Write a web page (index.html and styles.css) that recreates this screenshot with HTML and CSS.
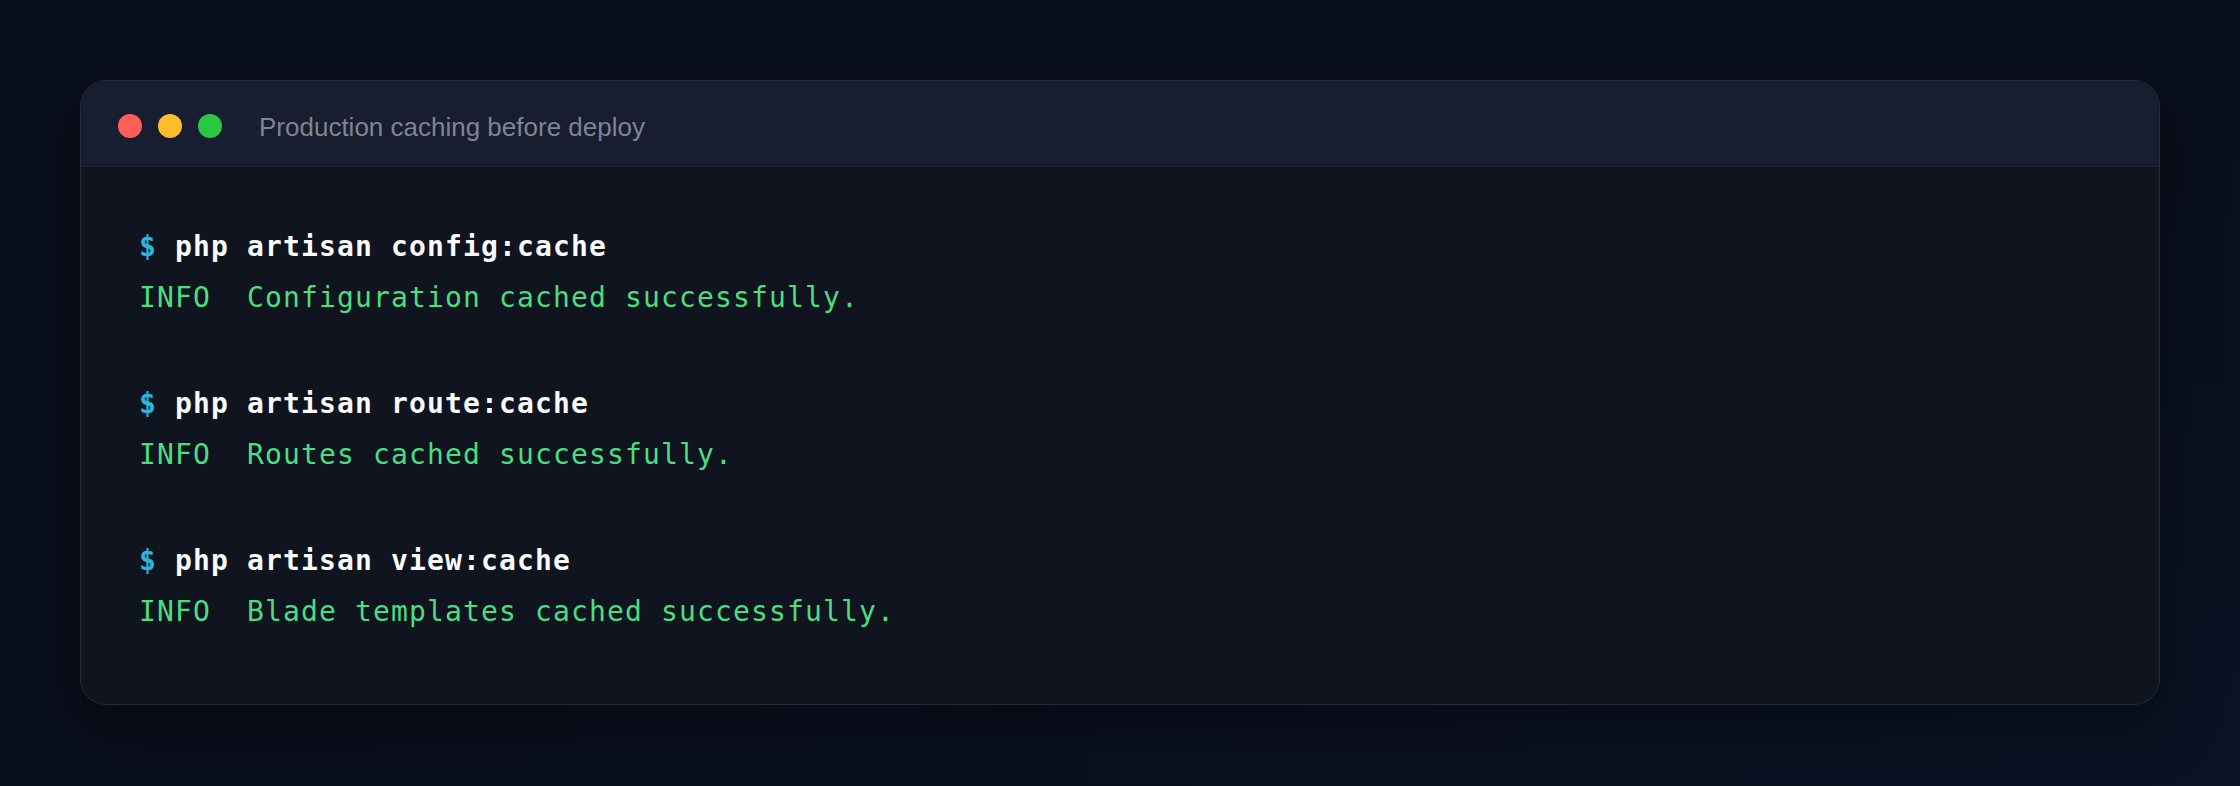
FILE: index.html
```html
<!DOCTYPE html>
<html lang="en">
<head>
<meta charset="utf-8">
<title>Production caching before deploy</title>
<link rel="stylesheet" href="styles.css">
</head>
<body>
<main class="page">
  <section class="terminal">
    <header class="term-head">
      <div class="dots">
        <span class="dot dot-red"></span>
        <span class="dot dot-yellow"></span>
        <span class="dot dot-green"></span>
      </div>
      <div class="term-title">Production caching before deploy</div>
    </header>
    <div class="term-body">
      <div class="block">
        <div class="line cmd"><span class="prompt">$</span> php artisan config:cache</div>
        <div class="line out">INFO  Configuration cached successfully.</div>
      </div>
      <div class="block">
        <div class="line cmd"><span class="prompt">$</span> php artisan route:cache</div>
        <div class="line out">INFO  Routes cached successfully.</div>
      </div>
      <div class="block">
        <div class="line cmd"><span class="prompt">$</span> php artisan view:cache</div>
        <div class="line out">INFO  Blade templates cached successfully.</div>
      </div>
    </div>
  </section>
</main>
</body>
</html>
```
FILE: styles.css
```css
html, body {
  margin: 0;
  padding: 0;
}
body {
  width: 2240px;
  height: 786px;
  overflow: hidden;
  background: radial-gradient(ellipse at 100% 100%, #0c1224 0%, #0a0f1c 60%, #0a0f1c 100%);
  font-family: "Liberation Sans", Arial, sans-serif;
}
.page {
  padding: 80px 80px 0 80px;
}
.terminal {
  border: 1px solid #252b3a;
  border-radius: 26px;
  background: #0f141f;
  overflow: hidden;
  box-shadow: 0 20px 60px rgba(0, 0, 0, 0.35);
}
.term-head {
  height: 86px;
  box-sizing: border-box;
  padding: 4px 37px 0 37px;
  background: #181d2f;
  border-bottom: 1px solid #1e2433;
  display: flex;
  align-items: center;
  gap: 37px;
}
.dots {
  display: flex;
  gap: 16px;
}
.dot {
  width: 24px;
  height: 24px;
  border-radius: 50%;
  display: block;
}
.dot-red { background: #ff5f57; }
.dot-yellow { background: #febc2e; }
.dot-green { background: #28c840; }
.term-title {
  color: #7e8494;
  font-size: 26px;
  line-height: 1;
  margin-top: 2px;
}
.term-body {
  padding: 54px 58px 67px 58px;
  font-family: "DejaVu Sans Mono", "Liberation Mono", monospace;
  font-size: 28px;
  letter-spacing: 1.14px;
}
.block + .block {
  margin-top: 55px;
}
.line {
  height: 51px;
  line-height: 51px;
  white-space: pre;
}
.cmd {
  color: #f8fafc;
  font-weight: 700;
}
.prompt {
  color: #28b7e0;
}
.out {
  color: #4ade80;
}
```
